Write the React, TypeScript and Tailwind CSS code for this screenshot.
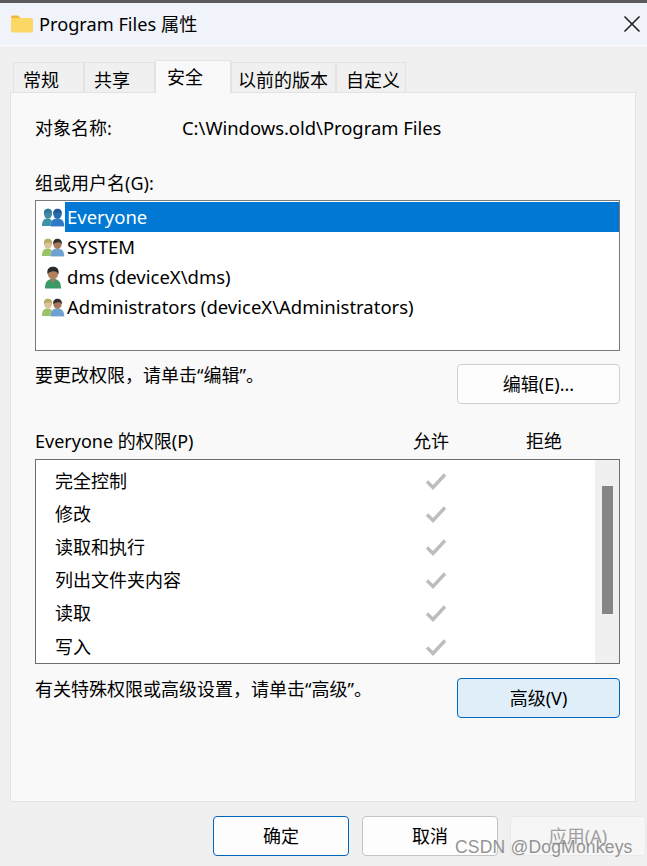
import React from "react";

const font = { fontFamily: '"Noto Sans", "Noto Sans CJK SC", sans-serif' };

function Folder() {
  return (
    <svg width="22" height="18" viewBox="0 0 22 18" className="shrink-0">
      <path d="M0 2a1.5 1.5 0 0 1 1.5-1.5h5.5l2.5 2.5H0z" fill="#f0b93a" />
      <rect x="0" y="3" width="22" height="14.5" rx="1.5" fill="#fbd765" />
    </svg>
  );
}

function GroupIcon({ kind }: { kind: "blue" | "mixed" }) {
  const c =
    kind === "blue"
      ? { s1: "#3f8aa6", h1: "#2f7a94", b1: "#3c93a6", s2: "#2a6cab", h2: "#1e5a96", b2: "#2f7cc4" }
      : { s1: "#dcc39a", h1: "#b4ad66", b1: "#9cc266", s2: "#a8785a", h2: "#30302e", b2: "#6ea0d0" };
  return (
    <svg width="23" height="19" viewBox="0 0 23 19" className="shrink-0">
      <path d="M0 18c0-5 1.500-7.500 5.500-7.500S11 13 11 18z" fill={c.b1} />
      <ellipse cx="6" cy="5.800" rx="4" ry="5" fill={c.s1} />
      <path d="M2 6C1.500 2 4 .8 6 .8S10.500 2 10 6C8.500 4.500 7 4.200 5.500 4.500 4 4.800 3 5 2 6z" fill={c.h1} />
      <path d="M8.500 18.500c0-5.500 2-8 6.800-8s7 2.500 7 8z" fill={c.b2} stroke="#ffffff" strokeOpacity="0.35" strokeWidth="0.500" />
      <ellipse cx="15.500" cy="6" rx="4.200" ry="5" fill={c.s2} />
      <path d="M11.300 6.200C10.800 2 13.500.8 15.500.8S20.300 2 19.800 6.200C18.500 4.500 17 4 15 4.500 13.500 4.900 12.300 5 11.300 6.200z" fill={c.h2} />
    </svg>
  );
}

function UserIcon() {
  return (
    <svg width="20" height="23" viewBox="0 0 20 23" className="shrink-0">
      <path d="M2 22.500c0-7 2.500-9.500 8-9.500s8 2.500 8 9.500z" fill="#3c9a68" />
      <path d="M7 13.500 10 17l3-3.500z" fill="#a8785a" />
      <ellipse cx="10" cy="7.500" rx="5.200" ry="6" fill="#b0805f" />
      <path d="M4.500 8C3.500 2.500 7 .8 10 .8s6.500 1.700 5.500 7.200C14 5.500 12 5 10 5.200 8 5.500 6 6 4.500 8z" fill="#2a2a2a" />
    </svg>
  );
}

function Check() {
  return (
    <svg width="24" height="20" viewBox="0 0 24 20" className="block">
      <path d="M3 10.500 9 16.500 21 3.500" fill="none" stroke="#bdbdbd" strokeWidth="3.400" />
    </svg>
  );
}

function Btn({ children, className = "" }: { children: React.ReactNode; className?: string }) {
  return (
    <div className={`flex items-center justify-center rounded-[4px] border text-[18px] ${className}`}>{children}</div>
  );
}

const tabs = [
  { t: "常规", c: "w-[71px] pl-[9px]" },
  { t: "共享", c: "w-[71px] pl-[9px]" },
  { t: "安全", c: "w-[76px] pl-[11px]", active: true },
  { t: "以前的版本", c: "w-[105px] pl-[6px]" },
  { t: "自定义", c: "w-[70px] pl-[9px]" },
];

const users: { name: string; icon: React.ReactNode; sel?: boolean }[] = [
  { name: "Everyone", icon: <GroupIcon kind="blue" />, sel: true },
  { name: "SYSTEM", icon: <GroupIcon kind="mixed" /> },
  { name: "dms (deviceX\\dms)", icon: <UserIcon /> },
  { name: "Administrators (deviceX\\Administrators)", icon: <GroupIcon kind="mixed" /> },
];

const perms = ["完全控制", "修改", "读取和执行", "列出文件夹内容", "读取", "写入"];

export default function App() {
  return (
    <div className="relative h-[866px] w-[647px] overflow-hidden bg-[#f0f0f0] text-[18px] leading-[24px] text-black" style={font}>
      <div className="h-[3px] bg-[#5a5a5a]" />
      <div className="flex h-[43px] items-center justify-between border-b border-[#fbfbfb] bg-[#f0f3f9] pl-[11px] pr-px">
        <div className="flex items-center gap-[6px]">
          <Folder />
          <span className="text-[18.200px]">Program Files 属性</span>
        </div>
        <svg width="28" height="28" viewBox="0 0 28 28">
          <path d="M6.500 6.500 21.500 21.500M21.500 6.500 6.500 21.500" stroke="#1a1a1a" strokeWidth="1.500" fill="none" />
        </svg>
      </div>

      <div className="flex h-[46px] items-end pl-[13px]">
        {tabs.map((t) =>
          t.active ? (
            <div key={t.t} className={`${t.c} z-10 -mb-px flex h-[33px] items-start border border-b-0 border-[#e3e3e3] bg-[#f9f9f9] pt-[4px] text-[18px]`}>
              {t.t}
            </div>
          ) : (
            <div key={t.t} className={`${t.c} flex h-[30px] items-center border border-b-0 border-[#e3e3e3] bg-[#f0f0f0] pt-[4px] text-[18px]`}>
              {t.t}
            </div>
          )
        )}
      </div>

      <div className="mx-[10px] flex h-[710px] w-[626px] flex-col border border-[#e3e3e3] bg-[#f9f9f9] pl-[24px] pr-[15px] pt-[23px]">
        <div className="flex h-[24px] items-center">
          <span className="w-[147px]">对象名称:</span>
          <span className="text-[18.400px]">C:\Windows.old\Program Files</span>
        </div>

        <div className="mt-[31px] h-[24px]">组或用户名(G):</div>
        <div className="mt-[5px] h-[151px] border border-[#7a7a7a] bg-white pt-px">
          {users.map((u) => (
            <div key={u.name} className="flex h-[30px] items-center pl-[5px]">
              <div className="flex w-[24px] shrink-0 justify-center">{u.icon}</div>
              <div className={`flex h-[30px] flex-1 items-center pl-[2px] text-[18.500px] ${u.sel ? "bg-[#0078d4] text-white" : ""}`}>{u.name}</div>
            </div>
          ))}
        </div>

        <div className="mt-[13px] flex items-start justify-between">
          <span className="-mt-px">要更改权限{"\uFF0C"}请单击“编辑”。</span>
          <Btn className="h-[40px] w-[163px] border-[#d0d0d0] bg-[#fdfdfd]">编辑(E)...</Btn>
        </div>

        <div className="mt-[25px] flex h-[24px] items-center">
          <span className="w-[378px]">Everyone 的权限(P)</span>
          <span className="w-[113px]">允许</span>
          <span>拒绝</span>
        </div>
        <div className="mt-[6px] flex h-[205px] border border-[#6e6e6e] bg-white">
          <div className="flex-1 overflow-hidden pt-[4px]">
            {perms.map((p) => (
              <div key={p} className="flex h-[33.200px] items-center pl-[19px]">
                <span className="w-[369px]">{p}</span>
                <Check />
              </div>
            ))}
          </div>
          <div className="w-[24px] bg-[#f0f0f0] pl-[7px] pr-[6px] pt-[26px]">
            <div className="h-[128px] bg-[#858585]" />
          </div>
        </div>

        <div className="mt-[14px] flex items-start justify-between">
          <span className="-mt-px">有关特殊权限或高级设置{"\uFF0C"}请单击“高级”。</span>
          <Btn className="h-[40px] w-[163px] border-[#0067c0] bg-[#e0eef9]">高级(V)</Btn>
        </div>
      </div>

      <div className="mt-[14px] flex justify-end pr-px">
        <Btn className="h-[40px] w-[136px] border-[#0067c0] bg-[#fdfdfd]">确定</Btn>
        <Btn className="ml-[13px] h-[40px] w-[136px] border-[#c4c4c4] bg-[#fdfdfd]">取消</Btn>
        <Btn className="ml-[12px] h-[40px] w-[136px] border-[#e8e8e8] bg-[#f6f6f6] text-[#a0a0a0]">应用(A)</Btn>
      </div>

      <div className="absolute left-[455px] top-[835px] text-[17.500px] leading-[24px] tracking-[0.2px] text-[#8a8a8a] opacity-90" style={{ fontFamily: '"Liberation Sans", sans-serif' }}>
        CSDN @DogMonkeys
      </div>
    </div>
  );
}
